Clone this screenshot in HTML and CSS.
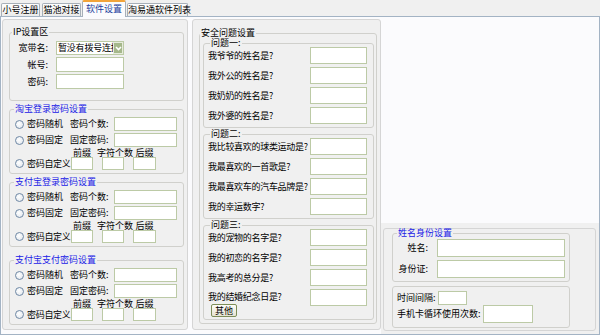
FILE: index.html
```html
<!DOCTYPE html>
<html lang="zh-CN">
<head>
    <meta charset="UTF-8">
    <title>软件设置</title>
    <link rel="stylesheet" href="styles.css">
</head>
<body>
    <div class="tabs">
        <div class="tab tab-1">小号注册</div>
        <div class="tab tab-2">猫池对接</div>
        <div class="tab tab-3 active">软件设置</div>
        <div class="tab tab-4">淘易通软件列表</div>
    </div>

    <div class="page">
        <!-- left: ip + password settings -->
        <div class="col col-left">
            <fieldset class="group ip">
                <legend>IP设置区</legend>
                <div class="ip-row first">
                    <label>宽带名:</label>
                    <div class="select">
                        <span>暂没有拨号连接</span>
                        <b class="drop"><svg width="7" height="5" viewBox="0 0 7 5"><path d="M1 1 L3.5 3.5 L6 1" fill="none" stroke="#fff" stroke-width="1.6"/></svg></b>
                    </div>
                </div>
                <div class="ip-row"><label>帐号:</label><input type="text" class="box"></div>
                <div class="ip-row"><label>密码:</label><input type="text" class="box"></div>
            </fieldset>

            <fieldset class="group pw">
                <legend>淘宝登录密码设置</legend>
                <div class="pw-row first"><span class="opt"><i class="radio"></i>密码随机</span><label>密码个数:</label><input type="text" class="box"></div>
                <div class="pw-row"><span class="opt"><i class="radio"></i>密码固定</span><label>固定密码:</label><input type="text" class="box"></div>
                <div class="pw-custom">
                    <span class="cap cap-a">前缀</span><span class="cap cap-b">字符个数</span><span class="cap cap-c">后缀</span>
                    <span class="opt"><i class="radio"></i>密码自定义</span>
                    <input type="text" class="box"><input type="text" class="box"><input type="text" class="box">
                </div>
            </fieldset>

            <fieldset class="group pw">
                <legend>支付宝登录密码设置</legend>
                <div class="pw-row first"><span class="opt"><i class="radio"></i>密码随机</span><label>密码个数:</label><input type="text" class="box"></div>
                <div class="pw-row"><span class="opt"><i class="radio"></i>密码固定</span><label>固定密码:</label><input type="text" class="box"></div>
                <div class="pw-custom">
                    <span class="cap cap-a">前缀</span><span class="cap cap-b">字符个数</span><span class="cap cap-c">后缀</span>
                    <span class="opt"><i class="radio"></i>密码自定义</span>
                    <input type="text" class="box"><input type="text" class="box"><input type="text" class="box">
                </div>
            </fieldset>

            <fieldset class="group pw pw-last">
                <legend>支付宝支付密码设置</legend>
                <div class="pw-row first"><span class="opt"><i class="radio"></i>密码随机</span><label>密码个数:</label><input type="text" class="box"></div>
                <div class="pw-row"><span class="opt"><i class="radio"></i>密码固定</span><label>固定密码:</label><input type="text" class="box"></div>
                <div class="pw-custom">
                    <span class="cap cap-a">前缀</span><span class="cap cap-b">字符个数</span><span class="cap cap-c">后缀</span>
                    <span class="opt"><i class="radio"></i>密码自定义</span>
                    <input type="text" class="box"><input type="text" class="box"><input type="text" class="box">
                </div>
            </fieldset>
        </div>

        <!-- middle: security questions -->
        <div class="col col-mid">
            <fieldset class="group qa">
                <legend>安全问题设置</legend>
                <fieldset class="group q">
                    <legend>问题一:</legend>
                    <div class="q-row"><span>我爷爷的姓名是?</span><input type="text" class="box"></div>
                    <div class="q-row"><span>我外公的姓名是?</span><input type="text" class="box"></div>
                    <div class="q-row"><span>我奶奶的姓名是?</span><input type="text" class="box"></div>
                    <div class="q-row"><span>我外婆的姓名是?</span><input type="text" class="box"></div>
                </fieldset>
                <fieldset class="group q">
                    <legend>问题二:</legend>
                    <div class="q-row"><span>我比较喜欢的球类运动是?</span><input type="text" class="box"></div>
                    <div class="q-row"><span>我最喜欢的一首歌是?</span><input type="text" class="box"></div>
                    <div class="q-row"><span>我最喜欢车的汽车品牌是?</span><input type="text" class="box"></div>
                    <div class="q-row"><span>我的幸运数字?</span><input type="text" class="box"></div>
                </fieldset>
                <fieldset class="group q q-last">
                    <legend>问题三:</legend>
                    <div class="q-row"><span>我的宠物的名字是?</span><input type="text" class="box"></div>
                    <div class="q-row"><span>我的初恋的名字是?</span><input type="text" class="box"></div>
                    <div class="q-row"><span>我高考的总分是?</span><input type="text" class="box"></div>
                    <div class="q-row last">
                        <div>
                            <span class="q-text">我的结婚纪念日是?</span>
                            <button class="btn">其他</button>
                        </div>
                        <input type="text" class="box">
                    </div>
                </fieldset>
            </fieldset>
        </div>

        <!-- right: identity -->
        <div class="col-right">
            <div class="side">
                <div class="side-box">
                    <fieldset class="group ident">
                        <legend>姓名身份设置</legend>
                        <div class="id-row first"><label>姓名:</label><input type="text" class="box"></div>
                        <div class="id-row"><label>身份证:</label><input type="text" class="box"></div>
                    </fieldset>
                    <fieldset class="group misc">
                        <div class="misc-row"><label>时间间隔:</label><input type="text" class="box short"></div>
                        <div class="misc-row"><label>手机卡循环使用次数:</label><input type="text" class="box count"></div>
                    </fieldset>
                </div>
            </div>
        </div>
    </div>
</body>
</html>
```

FILE: styles.css
```css
* {
    box-sizing: border-box;
}

body {
    margin: 0;
    width: 600px;
    height: 335px;
    overflow: hidden;
    background-color: #f0f0f0;
    font-family: "Noto Sans CJK SC", "Noto Sans", sans-serif;
    font-size: 9px;
    line-height: 12px;
    color: #000;
}

/* tab strip */
.tabs {
    display: flex;
    align-items: flex-end;
    height: 16px;
    padding-left: 1px;
}

.tab {
    height: 13px;
    margin-right: 2px;
    border: 1px solid #a7afb8;
    border-bottom: none;
    border-radius: 2px 2px 0 0;
    background: linear-gradient(#fefefe, #ebebea);
    line-height: 12px;
    text-align: center;
    white-space: nowrap;
}

.tab-1 { width: 39px; }
.tab-2 { width: 39px; }
.tab-3 { width: 44px; margin-left: -1px; }
.tab-4 { width: 61px; margin-left: -1px; }

.tab.active {
    position: relative;
    z-index: 1;
    height: 17px;
    margin-bottom: -1px;
    border-top: 2px solid #f2a43a;
    background: #fbfbfd;
    color: #1a3c9c;
    line-height: 13px;
}

/* main panel */
.page {
    display: flex;
    height: 319px;
    border: 1px solid #a3b3c4;
    background-color: #fbfbfd;
    padding: 2px 0 0 1px;
}

.col {
    background-color: #f0f0f0;
    border: 1px solid #d5d5d5;
    border-radius: 3px;
    margin-bottom: 4px;
}

.col-left {
    width: 186px;
    padding: 7px 3px 0 6px;
}

.col-mid {
    width: 189px;
    margin-left: 4px;
    padding: 9px 3px 0 6px;
}

.col-right {
    flex: 1;
    display: flex;
    flex-direction: column;
    justify-content: flex-end;
}

/* group boxes */
.group {
    margin: 0;
    padding: 0;
    min-width: 0;
    border: 1px solid #d0d0cc;
    border-radius: 3px;
}

.group legend {
    padding: 0 1px;
    line-height: 10px;
}

.box {
    margin: 0;
    padding: 0 2px;
    border: 1px solid #bccaa6;
    background-color: #fff;
    font: inherit;
    outline: none;
}

/* ip box */
.ip {
    padding-bottom: 11px;
}

.ip legend {
    margin-left: 2px;
}

.ip-row {
    display: flex;
    align-items: center;
    margin-top: 2px;
}

.ip-row.first {
    margin-top: 4px;
}

.ip-row label {
    width: 38px;
    margin-right: 8px;
    text-align: right;
}

.ip .box {
    width: 68px;
    height: 15px;
}

.select {
    display: flex;
    width: 68px;
    height: 14px;
    border: 1px solid #bccaa6;
    background-color: #fff;
    overflow: hidden;
}

.select span {
    flex: 1;
    min-width: 0;
    overflow: hidden;
    white-space: nowrap;
    padding-left: 1px;
    line-height: 12px;
    letter-spacing: -0.2px;
}

.drop {
    display: flex;
    align-items: center;
    justify-content: center;
    width: 10px;
    flex: none;
    background-color: #a5b78b;
    border: 1px solid #e6ecdc;
}

/* password boxes */
.pw {
    margin-top: 3px;
    padding: 0 6px 3px 5px;
}

.pw:first-of-type {
    margin-top: 2px;
}

.pw-last {
    margin-top: 8px;
}

.pw legend {
    margin-left: -1px;
    color: #2020e6;
}

.pw-row {
    display: flex;
    align-items: center;
    margin-top: 2px;
}

.pw-row.first {
    margin-top: 3px;
}

.opt {
    display: flex;
    align-items: center;
    width: 55px;
    white-space: nowrap;
}

.radio {
    flex: none;
    width: 9px;
    height: 9px;
    margin-right: 3px;
    border: 1px solid #6f88a5;
    border-radius: 50%;
    background: radial-gradient(circle at 40% 40%, #fff, #dde3ea);
}

.pw-row label {
    width: 44px;
    white-space: nowrap;
}

.pw-row .box {
    flex: 1;
    width: 0;
    height: 14px;
}

.pw-custom {
    display: grid;
    grid-template-columns: 47px 22px 22px 23px;
    grid-template-rows: 9px 13px;
    column-gap: 9px;
    margin-top: 1px;
}

.cap {
    grid-row: 1;
    justify-self: center;
    line-height: 9px;
    white-space: nowrap;
}

.cap-a { grid-column: 2; }
.cap-b { grid-column: 3; margin: 0 -9px 0 -5px; }
.cap-c { grid-column: 4; }

.pw-custom .opt,
.pw-custom .box {
    grid-row: 2;
}

.pw-custom .opt {
    width: auto;
    letter-spacing: -0.3px;
}

.pw-custom .box {
    width: auto;
    height: 13px;
}

/* security questions */
.qa {
    padding-bottom: 3px;
}

.qa legend,
.q legend,
.ident legend {
    line-height: 8px;
}

.q {
    margin: 2px 2px 0 3px;
    padding: 0 6px 3px 4px;
}

.q-last {
    padding-bottom: 2px;
}

.q legend {
    margin-left: 2px;
}

.q-row {
    display: grid;
    grid-template-columns: 1fr 57px;
    align-items: center;
    height: 17px;
    margin-top: 3px;
    white-space: nowrap;
    letter-spacing: -0.3px;
}

.q-row:first-of-type {
    margin-top: 0;
}

.q-row .box {
    height: 17px;
}

.q-row.last {
    height: auto;
    align-items: start;
}

.q-text {
    display: block;
    line-height: 15px;
}

.btn {
    display: block;
    width: 26px;
    height: 13px;
    margin-left: 3px;
    padding: 0;
    border: 1px solid #7d8d58;
    border-radius: 2px;
    background: linear-gradient(#fdfdf8, #e6e3d2);
    font: inherit;
    line-height: 10px;
    letter-spacing: 0;
}

/* right side */
.side {
    height: 111px;
    background-color: #f0f0f0;
    padding: 5px 3px 3px 2px;
}

.side-box {
    height: 103px;
    border: 1px solid #d5d5d5;
    border-radius: 3px;
    padding: 0 25px 2px 8px;
}

.ident {
    padding: 0 4px 3px 4px;
}

.ident legend {
    margin-left: 0;
    color: #2020e6;
}

.id-row {
    display: flex;
    align-items: center;
    margin-top: 3px;
}

.id-row.first {
    margin-top: 2px;
}

.id-row label {
    width: 31px;
    margin-right: 9px;
    text-align: right;
    white-space: nowrap;
}

.id-row .box {
    flex: 1;
    width: 0;
    height: 18px;
}

.misc {
    margin-top: 4px;
    padding: 4px;
}

.misc-row {
    display: flex;
    align-items: center;
}

.misc-row label {
    margin-right: 2px;
    white-space: nowrap;
}

.short {
    width: 29px;
    height: 14px;
}

.count {
    width: 50px;
    height: 18px;
}
```
